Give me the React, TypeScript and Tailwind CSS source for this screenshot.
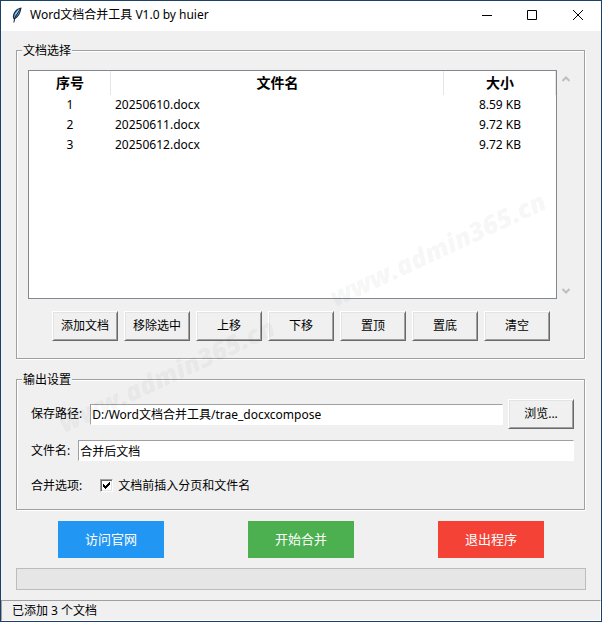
import { useState } from "react";
import type { ReactNode } from "react";

const documents = [
  { name: "20250610.docx", size: "8.59 KB" },
  { name: "20250611.docx", size: "9.72 KB" },
  { name: "20250612.docx", size: "9.72 KB" },
];

const listActions = ["添加文档", "移除选中", "上移", "下移", "置顶", "置底", "清空"];

function FeatherIcon() {
  return (
    <svg width="12" height="16" viewBox="0 0 12 16" aria-hidden="true">
      <path d="M10.5 0.5 C7 0.8 3.5 3.5 2.2 7.5 C1.6 9.5 1.8 11 2.8 12.4 C5.5 11.8 8.5 8.5 9.5 5 C10 3.2 10.5 1.8 10.5 0.5 Z" fill="#1c2a3c" />
      <path d="M8.8 1.8 C6 3.2 3.9 5.6 3.2 8.2 C2.8 9.6 2.9 10.6 3.4 11.2 C5.8 9.9 7.8 7.5 8.6 4.8 Z" fill="#5a9ae0" />
      <path d="M9.2 2 L4 10.5 L2.8 15.5" fill="none" stroke="#16202c" strokeWidth="1" />
      <path d="M8 2.4 L4.4 7.6" fill="none" stroke="#cfe3f8" strokeWidth="0.8" />
    </svg>
  );
}

function CaptionButton({ label, children }: { label: string; children: ReactNode }) {
  return (
    <button type="button" aria-label={label} className="flex h-full w-[46px] items-center justify-center hover:bg-[#e5e5e5]">
      <svg width="12" height="12" viewBox="0 0 12 12" fill="none" stroke="#000" aria-hidden="true">
        {children}
      </svg>
    </button>
  );
}

function RaisedButton({ children }: { children: ReactNode }) {
  return (
    <button
      type="button"
      className="h-[30px] w-[66px] shrink-0 border border-t-white border-r-[#696969] border-b-[#696969] border-l-white bg-[#f0f0f0] shadow-[inset_1px_1px_0_#e3e3e3,inset_-1px_-1px_0_#a0a0a0]"
    >
      {children}
    </button>
  );
}

function Group({ title, className, children }: { title: string; className: string; children: ReactNode }) {
  return (
    <section
      aria-label={title}
      className={`mr-px border border-[#a0a0a0] pr-[10px] pl-[11px] shadow-[1px_1px_0_#fff,inset_1px_1px_0_#fff] ${className}`}
    >
      <h2 className="-mt-2 -ml-[6px] h-4 w-fit bg-[#f0f0f0] px-px leading-4">{title}</h2>
      {children}
    </section>
  );
}

function Watermark({ className }: { className: string }) {
  return (
    <div
      aria-hidden="true"
      className={`pointer-events-none absolute origin-bottom-left -rotate-[25deg] font-['Open_Sans'] text-[26px] leading-7 font-extrabold whitespace-nowrap text-black/5 italic ${className}`}
    >
      www.admin365.cn
    </div>
  );
}

const fieldStyle =
  "h-[21px] min-w-0 flex-1 border border-t-[#a0a0a0] border-r-white border-b-white border-l-[#a0a0a0] bg-white px-px outline-none";

export default function App() {
  const [path, setPath] = useState("D:/Word文档合并工具/trae_docxcompose");
  const [fileName, setFileName] = useState("合并后文档");
  const [insertBreaks, setInsertBreaks] = useState(true);

  return (
    <div className="relative flex min-h-screen flex-col overflow-hidden border border-[#1b4069] bg-[#f0f0f0] font-['Noto_Sans','Noto_Sans_CJK_SC',sans-serif] text-[12px] leading-4 text-black">
      <header className="flex h-[30px] items-center bg-white pb-[2px] pl-[10px]">
        <FeatherIcon />
        <h1 className="flex-1 pl-[7px]">Word文档合并工具 V1.0 by huier</h1>
        <CaptionButton label="最小化">
          <path d="M2 6.5h10" />
        </CaptionButton>
        <CaptionButton label="最大化">
          <path d="M1.5 1.5h9v9h-9z" />
        </CaptionButton>
        <CaptionButton label="关闭">
          <path d="M1 1l10 10M11 1L1 11" />
        </CaptionButton>
      </header>

      <main className="flex-1 px-[15px] pt-[19px]">
        <Group title="文档选择" className="pb-[17px]">
          <div className="mt-[11px] flex h-[229px]">
            <div className="flex-1 border border-[#828790] bg-white">
              <table className="w-full table-fixed border-collapse">
                <colgroup>
                  <col className="w-[82px]" />
                  <col />
                  <col className="w-[112px]" />
                </colgroup>
                <thead>
                  <tr className="h-6 text-[14px]">
                    <th className="p-0 pb-px shadow-[inset_-1px_0_0_#e5e5e5]">序号</th>
                    <th className="p-0 pb-px shadow-[inset_-1px_0_0_#e5e5e5]">文件名</th>
                    <th className="p-0 pb-px shadow-[inset_-1px_0_0_#e5e5e5]">大小</th>
                  </tr>
                </thead>
                <tbody>
                  {documents.map((doc, index) => (
                    <tr key={doc.name} className="h-5">
                      <td className="p-0 text-center">{index + 1}</td>
                      <td className="p-0 pl-1">{doc.name}</td>
                      <td className="p-0 text-center">{doc.size}</td>
                    </tr>
                  ))}
                </tbody>
              </table>
            </div>
            <div className="flex w-[17px] flex-col justify-between">
              <button type="button" aria-label="向上滚动" className="flex h-[17px] items-center justify-center">
                <svg width="8" height="6" viewBox="0 0 8 6" fill="none" stroke="#bfbfbf" strokeWidth="2" aria-hidden="true">
                  <path d="M0.5 5L4 1.5L7.5 5" />
                </svg>
              </button>
              <button type="button" aria-label="向下滚动" className="flex h-[17px] items-center justify-center">
                <svg width="8" height="6" viewBox="0 0 8 6" fill="none" stroke="#bfbfbf" strokeWidth="2" aria-hidden="true">
                  <path d="M0.5 1L4 4.5L7.5 1" />
                </svg>
              </button>
            </div>
          </div>
          <div className="mt-3 flex justify-center gap-[6px]">
            {listActions.map((action) => (
              <RaisedButton key={action}>{action}</RaisedButton>
            ))}
          </div>
        </Group>

        <Group title="输出设置" className="mt-5 pb-[13px]">
          <div className="mt-[11px] flex items-center pl-[3px]">
            <label htmlFor="path" className="mr-2">保存路径:</label>
            <input id="path" value={path} onChange={(e) => setPath(e.target.value)} className={`mr-[5px] ${fieldStyle}`} />
            <RaisedButton>浏览...</RaisedButton>
          </div>
          <div className="mt-[11px] flex items-center pl-[3px]">
            <label htmlFor="file-name" className="mr-2">文件名:</label>
            <input id="file-name" value={fileName} onChange={(e) => setFileName(e.target.value)} className={fieldStyle} />
          </div>
          <div className="mt-[14px] flex h-[21px] items-center pl-[3px]">
            <span className="mr-[18px]">合并选项:</span>
            <label className="flex items-center gap-[5px]">
              <span className="grid size-[13px]">
                <input
                  type="checkbox"
                  checked={insertBreaks}
                  onChange={(e) => setInsertBreaks(e.target.checked)}
                  className="peer col-start-1 row-start-1 size-[13px] appearance-none border border-t-[#a0a0a0] border-r-white border-b-white border-l-[#a0a0a0] bg-white shadow-[inset_1px_1px_0_#696969,inset_-1px_-1px_0_#e3e3e3]"
                />
                <svg
                  viewBox="0 0 13 13"
                  shapeRendering="crispEdges"
                  aria-hidden="true"
                  className="pointer-events-none invisible col-start-1 row-start-1 size-[13px] peer-checked:visible"
                >
                  <path d="M3 5h1v1h1v1h1v-1h1v-1h1v-1h1v-1h1v3h-1v1h-1v1h-1v1h-1v1h-1v-1h-1v-1h-1z" fill="#000" />
                </svg>
              </span>
              文档前插入分页和文件名
            </label>
          </div>
        </Group>

        <div className="mt-[11px] grid grid-cols-3 justify-items-center text-[13px] text-white">
          <button type="button" className="h-[37px] w-[106px] bg-[#2196f3] pb-[2px]">访问官网</button>
          <button type="button" className="h-[37px] w-[106px] bg-[#4caf50] pb-[2px]">开始合并</button>
          <button type="button" className="h-[37px] w-[106px] bg-[#f44336] pb-[2px]">退出程序</button>
        </div>

        <div
          role="progressbar"
          aria-label="合并进度"
          aria-valuenow={0}
          aria-valuemin={0}
          aria-valuemax={100}
          className="mt-[10px] mb-[10px] h-[22px] border border-[#bcbcbc] bg-[#e6e6e6]"
        />
      </main>

      <footer className="flex h-[21px] items-center border border-t-[#a0a0a0] border-r-white border-b-white border-l-[#a0a0a0] pl-[10px]">
        已添加 3 个文档
      </footer>

      <Watermark className="top-[282px] left-[336px]" />
      <Watermark className="top-[408px] left-[65px]" />
    </div>
  );
}
